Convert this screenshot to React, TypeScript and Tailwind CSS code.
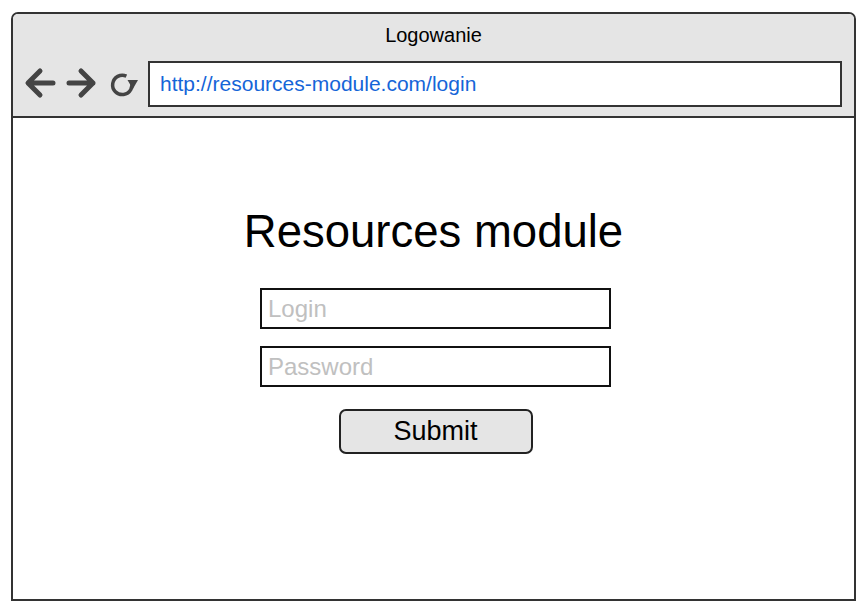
export default function App() {
  return (
    <div className="h-[615px] w-[866px] bg-white pl-[11px] pt-[12px] font-['Liberation_Sans',Arial,sans-serif]">
      <div className="flex h-[589px] w-[845px] flex-col overflow-hidden rounded-t-[7px] border-2 border-[#333]">
        {/* browser chrome */}
        <div className="h-[104px] shrink-0 border-b-2 border-[#333] bg-[#e5e5e5]">
          <div className="pt-[9px] text-center text-[20px] leading-[24px] text-black">Logowanie</div>
          <div className="mt-[14px] flex items-center pr-[12px]">
            <svg width="135" height="46" viewBox="0 0 135 46" className="shrink-0">
              <g fill="none" stroke="#444" strokeWidth="5" strokeLinecap="round" strokeLinejoin="round">
                <path d="M40 22 H16 M27 10 L15 22 L27 34" />
                <path d="M56 22 H80 M68 10 L80 22 L68 34" />
              </g>
              <path d="M113.4 15.1 A9.7 9.7 0 1 0 118.2 20" fill="none" stroke="#444" strokeWidth="3.5" />
              <path d="M114.5 19 L125 19 L119.8 28 Z" fill="#444" />
            </svg>
            <div className="flex h-[46px] flex-1 items-center border-2 border-[#333] bg-white pl-[10px] text-[21px] text-[#1565d8]">
              http://resources-module.com/login
            </div>
          </div>
        </div>

        {/* page */}
        <div className="flex flex-1 flex-col items-center bg-white">
          <h1 className="mt-[91px] text-[45.5px] leading-[45px] text-black">Resources module</h1>
          <div className="mt-[34px] flex flex-col items-center pl-[4px]">
            <input
              placeholder="Login"
              className="h-[41px] w-[351px] border-2 border-[#111] bg-white pl-[6px] text-[24px] outline-none placeholder:text-[#c0c0c0]"
            />
            <input
              type="password"
              placeholder="Password"
              className="mt-[17px] h-[41px] w-[351px] border-2 border-[#111] bg-white pl-[6px] text-[24px] outline-none placeholder:text-[#c0c0c0]"
            />
            <button
              type="button"
              className="mt-[22px] h-[45px] w-[194px] rounded-[7px] border-2 border-[#222] bg-[#e5e5e5] text-[27px] leading-none text-black"
            >
              Submit
            </button>
          </div>
        </div>
      </div>
    </div>
  )
}
